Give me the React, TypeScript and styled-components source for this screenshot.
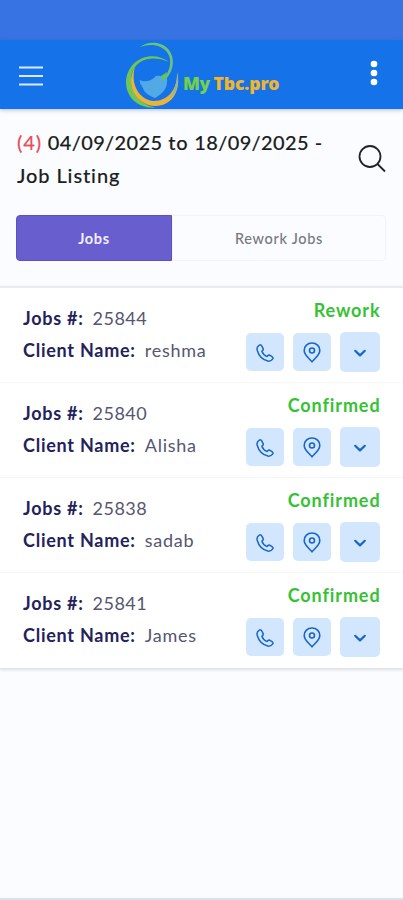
import React from "react";
import styled, { createGlobalStyle } from "styled-components";

const GlobalStyle = createGlobalStyle`
  * { box-sizing: border-box; }
  body { margin: 0; background: #fafcff; }
`;

const Screen = styled.div`
  display: flex;
  flex-direction: column;
  width: 100%;
  height: 900px;
  overflow: hidden;
  background: #fafcff;
  border-bottom: 2px solid #dcdfeb;
  font-family: Lato, "Liberation Sans", sans-serif;
  color: #1d1d20;
`;

const StatusBar = styled.div`
  flex: none;
  height: 40px;
  background: #3873e3;
`;

const Header = styled.header`
  flex: none;
  display: flex;
  align-items: flex-start;
  height: 69px;
  padding: 0 25px 0 18px;
  background: #1672e9;
  box-shadow: 0 1px 4px rgba(40, 80, 120, 0.35);
`;

const IconButton = styled.button<{ $top: number }>`
  flex: none;
  display: flex;
  margin: ${(p) => p.$top}px 0 0;
  padding: 0;
  border: 0;
  background: none;
`;

const Brand = styled.div`
  display: flex;
  flex: 1;
  margin-left: 77px;
`;

const BrandName = styled.div`
  display: flex;
  gap: 4px;
  margin: 31px 0 0;
  font: 900 17.5px/24px "Noto Sans", sans-serif;
`;

const BrandWord = styled.span<{ $color: string; $spacing: number }>`
  color: ${(p) => p.$color};
  letter-spacing: ${(p) => p.$spacing}px;
`;

const TitleRow = styled.section`
  flex: none;
  display: flex;
  justify-content: space-between;
  padding: 17px 16px 0 17px;
  height: 106px;
`;

const Title = styled.h1`
  display: flex;
  flex-wrap: wrap;
  align-content: flex-start;
  column-gap: 5.8px;
  margin: 0;
  width: 325px;
  font-size: 20px;
  line-height: 33px;
  font-weight: 500;
  letter-spacing: 0.9px;
  -webkit-text-stroke: 0.12px currentColor;
`;

const Count = styled.span`
  color: #e4505c;
`;

const DateText = styled.span`
  letter-spacing: 0.35px;
`;

const Tabs = styled.nav`
  flex: none;
  display: flex;
  height: 46px;
  margin: 0 17px 25px 16px;
`;

const Tab = styled.button<{ $active?: boolean }>`
  flex: ${(p) => (p.$active ? "0 0 156px" : "1")};
  padding: 0;
  border: 1px solid ${(p) => (p.$active ? "#5d50c4" : "#f1f3f6")};
  border-radius: ${(p) => (p.$active ? "4px 0 0 4px" : "0 4px 4px 0")};
  background: ${(p) => (p.$active ? "#695ecd" : "transparent")};
  color: ${(p) => (p.$active ? "#f1efff" : "#77787d")};
  font: ${(p) => (p.$active ? 700 : 500)} 14.5px Lato, sans-serif;
  letter-spacing: 0.7px;
`;

const List = styled.main`
  flex: none;
  border-top: 2px solid #e9ecee;
  border-bottom: 1px solid #e3e4e6;
  background: #fff;
  box-shadow: 0 1px 3px rgba(0, 0, 0, 0.12);
`;

const Row = styled.article`
  display: flex;
  justify-content: space-between;
  height: 95px;
  padding: 0 23px;
  border-bottom: 1px solid #f6f6f7;
  &:last-child { border-bottom: 0; }
`;

const Details = styled.div`
  padding-top: 15px;
  font-size: 18px;
  line-height: 31.5px;
  letter-spacing: 0.75px;
  white-space: nowrap;
  color: #55566f;
`;

const Label = styled.span`
  margin-right: 9px;
  font-weight: 700;
  color: #23225a;
`;

const JobNumber = styled.span`
  letter-spacing: 0.45px;
`;

const Side = styled.div`
  display: flex;
  flex-direction: column;
  align-items: flex-end;
`;

const Status = styled.div`
  margin: 9px -0.5px 0 0;
  font-size: 18px;
  line-height: 26px;
  font-weight: 700;
  letter-spacing: 0.9px;
  color: #35c233;
`;

const Actions = styled.div`
  display: flex;
  align-items: center;
  gap: 9px;
  margin-top: 9px;
`;

const Action = styled.button<{ $large?: boolean }>`
  display: flex;
  align-items: center;
  justify-content: center;
  width: ${(p) => (p.$large ? 40 : 38)}px;
  height: ${(p) => (p.$large ? 40 : 38)}px;
  padding: 1px 0 0;
  border: 0;
  border-radius: 5px;
  background: #d2e7fe;
  color: #1966c8;
`;

const LogoMark = () => (
  <svg width="62" height="69" viewBox="120 40 62 69" fill="none">
    <path d="M139 47C147 41 161 41 168 50C174 58 173 69 166 78L162 80C169 71 172 60 166 52C160 45 150 43 139 47Z" fill="#68c37d" />
    <path d="M168 62C151 49 126 59 125 82C125 98 138 109 155 107.5C140 105 130 94 130 80C130 62 148 53 168 62Z" fill="#6fc653" />
    <path d="M134 67C124 84 134 104 153 106C170 107 181 91 176 72C177 89 167 101 153 101C138 100 129 84 134 67Z" fill="#e8b53a" />
    <path d="M176 73C179 84 175 94 168 99C174 91 176 83 176 73Z" fill="#86b7a2" />
    <path d="M138.500 80C143 82 149 82 154 77C156 75 159 76 162 77L166 78C167 87 163 93 154 98C149 96 143 93 142 88L139.500 84Z" fill="#51a9e5" />
    <path d="M166 72L165 79L161 81L160 76Z" fill="#60c16b" />
  </svg>
);

const MenuIcon = () => (
  <svg width="26" height="22" viewBox="0 0 26 22" stroke="#d9ecff" strokeWidth="2.200">
    <path d="M1 2.500H25M1 11H25M1 19.500H25" />
  </svg>
);

const DotsIcon = () => (
  <svg width="8" height="26" viewBox="0 0 8 26" fill="#fff">
    <circle cx="4" cy="4" r="3.300" />
    <circle cx="4" cy="13" r="3.300" />
    <circle cx="4" cy="22" r="3.300" />
  </svg>
);

const SearchIcon = () => (
  <svg width="30" height="30" viewBox="0 0 30 30" fill="none" stroke="#222327" strokeWidth="1.800">
    <circle cx="13" cy="12.500" r="10.500" />
    <path d="M20.500 20L28 27.500" />
  </svg>
);

const PhoneIcon = () => (
  <svg width="18" height="18" viewBox="0 0 18 18" fill="none" stroke="currentColor" strokeWidth="1.500" strokeLinejoin="round">
    <path d="M3.700 0.900C1.500 2.100 0.500 3.800 1.200 6.300C2.700 11.700 6.700 15.800 11.900 17.100C14 17.500 15.800 16.300 17 14.600C17.200 13.500 16.600 12.900 15.700 12.300L13.900 11.300C12.900 10.900 12.300 11.100 11.700 11.800L11 12.600C8.800 11.700 6.700 9.500 5.900 7.200L6.700 6.400C7.400 5.800 7.400 5.100 7 4.300L5.900 2.100C5.300 1.100 4.700 0.700 3.700 0.900Z" />
  </svg>
);

const PinIcon = () => (
  <svg width="18" height="21" viewBox="0 0 18 21" fill="none" stroke="currentColor" strokeWidth="1.600">
    <path d="M9 1C4.500 1 1.200 4.200 1.200 8.400C1.200 12.700 5.600 16 9 19.700C12.400 16 16.800 12.700 16.800 8.400C16.800 4.200 13.500 1 9 1Z" />
    <circle cx="9" cy="8.500" r="2.500" />
  </svg>
);

const ChevronIcon = () => (
  <svg width="14" height="10" viewBox="0 0 14 10" fill="none" stroke="currentColor" strokeWidth="2.200" strokeLinecap="round" strokeLinejoin="round">
    <path d="M2.200 2.800L7 7.400L11.800 2.800" />
  </svg>
);

const jobs = [
  { id: "25844", client: "reshma", status: "Rework" },
  { id: "25840", client: "Alisha", status: "Confirmed" },
  { id: "25838", client: "sadab", status: "Confirmed" },
  { id: "25841", client: "James", status: "Confirmed" },
];

export default function App() {
  return (
    <Screen>
      <GlobalStyle />
      <StatusBar />
      <Header>
        <IconButton $top={25} aria-label="Menu"><MenuIcon /></IconButton>
        <Brand>
          <LogoMark />
          <BrandName>
            <BrandWord $color="#72d04c" $spacing={-0.5}>My</BrandWord>
            <BrandWord $color="#efb52f" $spacing={-0.1}>Tbc.pro</BrandWord>
          </BrandName>
        </Brand>
        <IconButton $top={20} aria-label="More"><DotsIcon /></IconButton>
      </Header>
      <TitleRow>
        <Title>
          <Count>(4)</Count>
          <DateText>04/09/2025</DateText>
          <span>to</span>
          <DateText>18/09/2025</DateText>
          <span>-</span>
          <span>Job Listing</span>
        </Title>
        <IconButton $top={18} aria-label="Search"><SearchIcon /></IconButton>
      </TitleRow>
      <Tabs>
        <Tab $active>Jobs</Tab>
        <Tab>Rework Jobs</Tab>
      </Tabs>
      <List>
        {jobs.map((job) => (
          <Row key={job.id}>
            <Details>
              <div><Label>Jobs #:</Label><JobNumber>{job.id}</JobNumber></div>
              <div><Label>Client Name:</Label>{job.client}</div>
            </Details>
            <Side>
              <Status>{job.status}</Status>
              <Actions>
                <Action aria-label="Call"><PhoneIcon /></Action>
                <Action aria-label="Location"><PinIcon /></Action>
                <Action $large aria-label="Expand"><ChevronIcon /></Action>
              </Actions>
            </Side>
          </Row>
        ))}
      </List>
    </Screen>
  );
}
